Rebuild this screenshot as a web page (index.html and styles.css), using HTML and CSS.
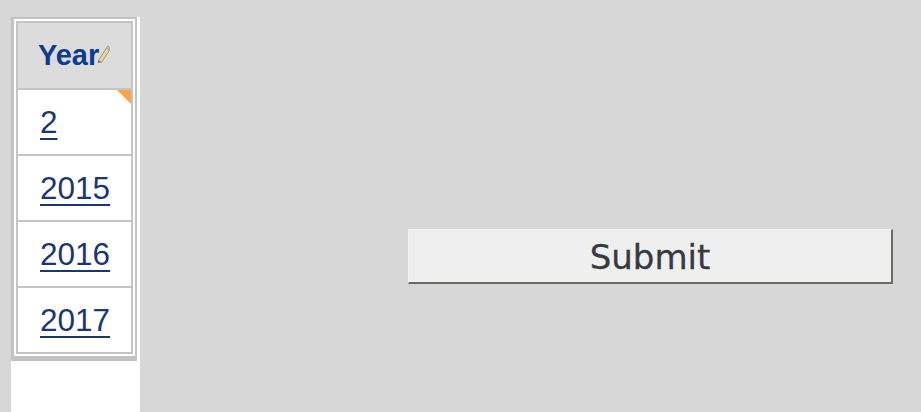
FILE: index.html
```html
<!DOCTYPE html>
<html>
<head>
<meta charset="utf-8">
<link rel="stylesheet" href="styles.css">
</head>
<body>
<div class="page">
  <div class="panel">
    <div class="frame">
      <div class="grid">
        <div class="cell head">
          <span class="head-text">Year</span>
          <svg class="pencil" width="14" height="18" viewBox="0 0 14 18">
            <path d="M2.5 15.5 L10.5 3 L13.5 5 L5.5 17.5 Z" fill="#ecd79a" stroke="#a8987a" stroke-width="1"/>
            <path d="M2.5 15.5 L1.5 17.8 L5.5 17.5 Z" fill="#6f6a60"/>
            <path d="M10.5 3 L11.8 1 L14 2.6 L13.5 5 Z" fill="#d8c6b8" stroke="#a8987a" stroke-width="0.8"/>
          </svg>
        </div>
        <div class="cell first">
          <a class="link" href="#">2</a>
          <span class="flag"></span>
        </div>
        <div class="cell"><a class="link" href="#">2015</a></div>
        <div class="cell"><a class="link" href="#">2016</a></div>
        <div class="cell"><a class="link" href="#">2017</a></div>
      </div>
    </div>
  </div>
  <div class="main">
    <button class="submit" type="button">Submit</button>
  </div>
</div>
</body>
</html>
```
FILE: styles.css
```css
html, body {
  margin: 0;
  padding: 0;
}
body {
  background: #d7d7d7;
  width: 921px;
  height: 412px;
  overflow: hidden;
}
.page {
  display: flex;
  align-items: flex-start;
  height: 412px;
}
.panel {
  margin: 17px 0 0 11px;
  width: 129px;
  height: 395px;
  background: #ffffff;
}
.frame {
  width: 126px;
  box-sizing: border-box;
  border-left: 3px solid #c2c2c2;
  border-top: 2px solid #c2c2c2;
  border-right: 2px solid #c2c2c2;
  border-bottom: 5px solid #c2c2c2;
  padding: 2px;
  background: #ffffff;
}
.grid {
  display: flex;
  flex-direction: column;
}
.cell {
  position: relative;
  height: 64px;
  border: 2px solid #c4c4c4;
  border-top: none;
  display: flex;
  align-items: center;
  padding-left: 22px;
  background: #ffffff;
}
.cell.head {
  height: 65px;
  border-top: 2px solid #c4c4c4;
  background: #dcdcdc;
  padding-left: 20px;
}
.head-text {
  font-family: "Liberation Sans", Arial, sans-serif;
  font-weight: bold;
  font-size: 29px;
  color: #0d3c8e;
}
.pencil {
  position: absolute;
  left: 78px;
  top: 22px;
}
.link {
  font-family: "Liberation Sans", Arial, sans-serif;
  font-size: 31.5px;
  color: #1b3670;
  text-decoration: underline;
  text-decoration-thickness: 2px;
  text-underline-offset: 5px;
}
.flag {
  position: absolute;
  top: 0;
  right: 0;
  width: 14px;
  height: 14px;
  background: #f8a448;
  clip-path: polygon(0 0, 100% 0, 100% 100%);
}
.main {
  padding: 229px 0 0 268px;
}
.submit {
  width: 485px;
  height: 55px;
  box-sizing: border-box;
  margin: 0;
  padding: 2px 0 0 0;
  background: #efefef;
  border-top: 1px solid #f7f3ee;
  border-left: 1px solid #f7f3ee;
  border-right: 2px solid #6d6b62;
  border-bottom: 2px solid #6d6b62;
  font-family: "DejaVu Sans", Verdana, sans-serif;
  font-size: 34px;
  color: #363b42;
  line-height: 1;
  -webkit-text-stroke: 0.3px #363b42;
}
```
